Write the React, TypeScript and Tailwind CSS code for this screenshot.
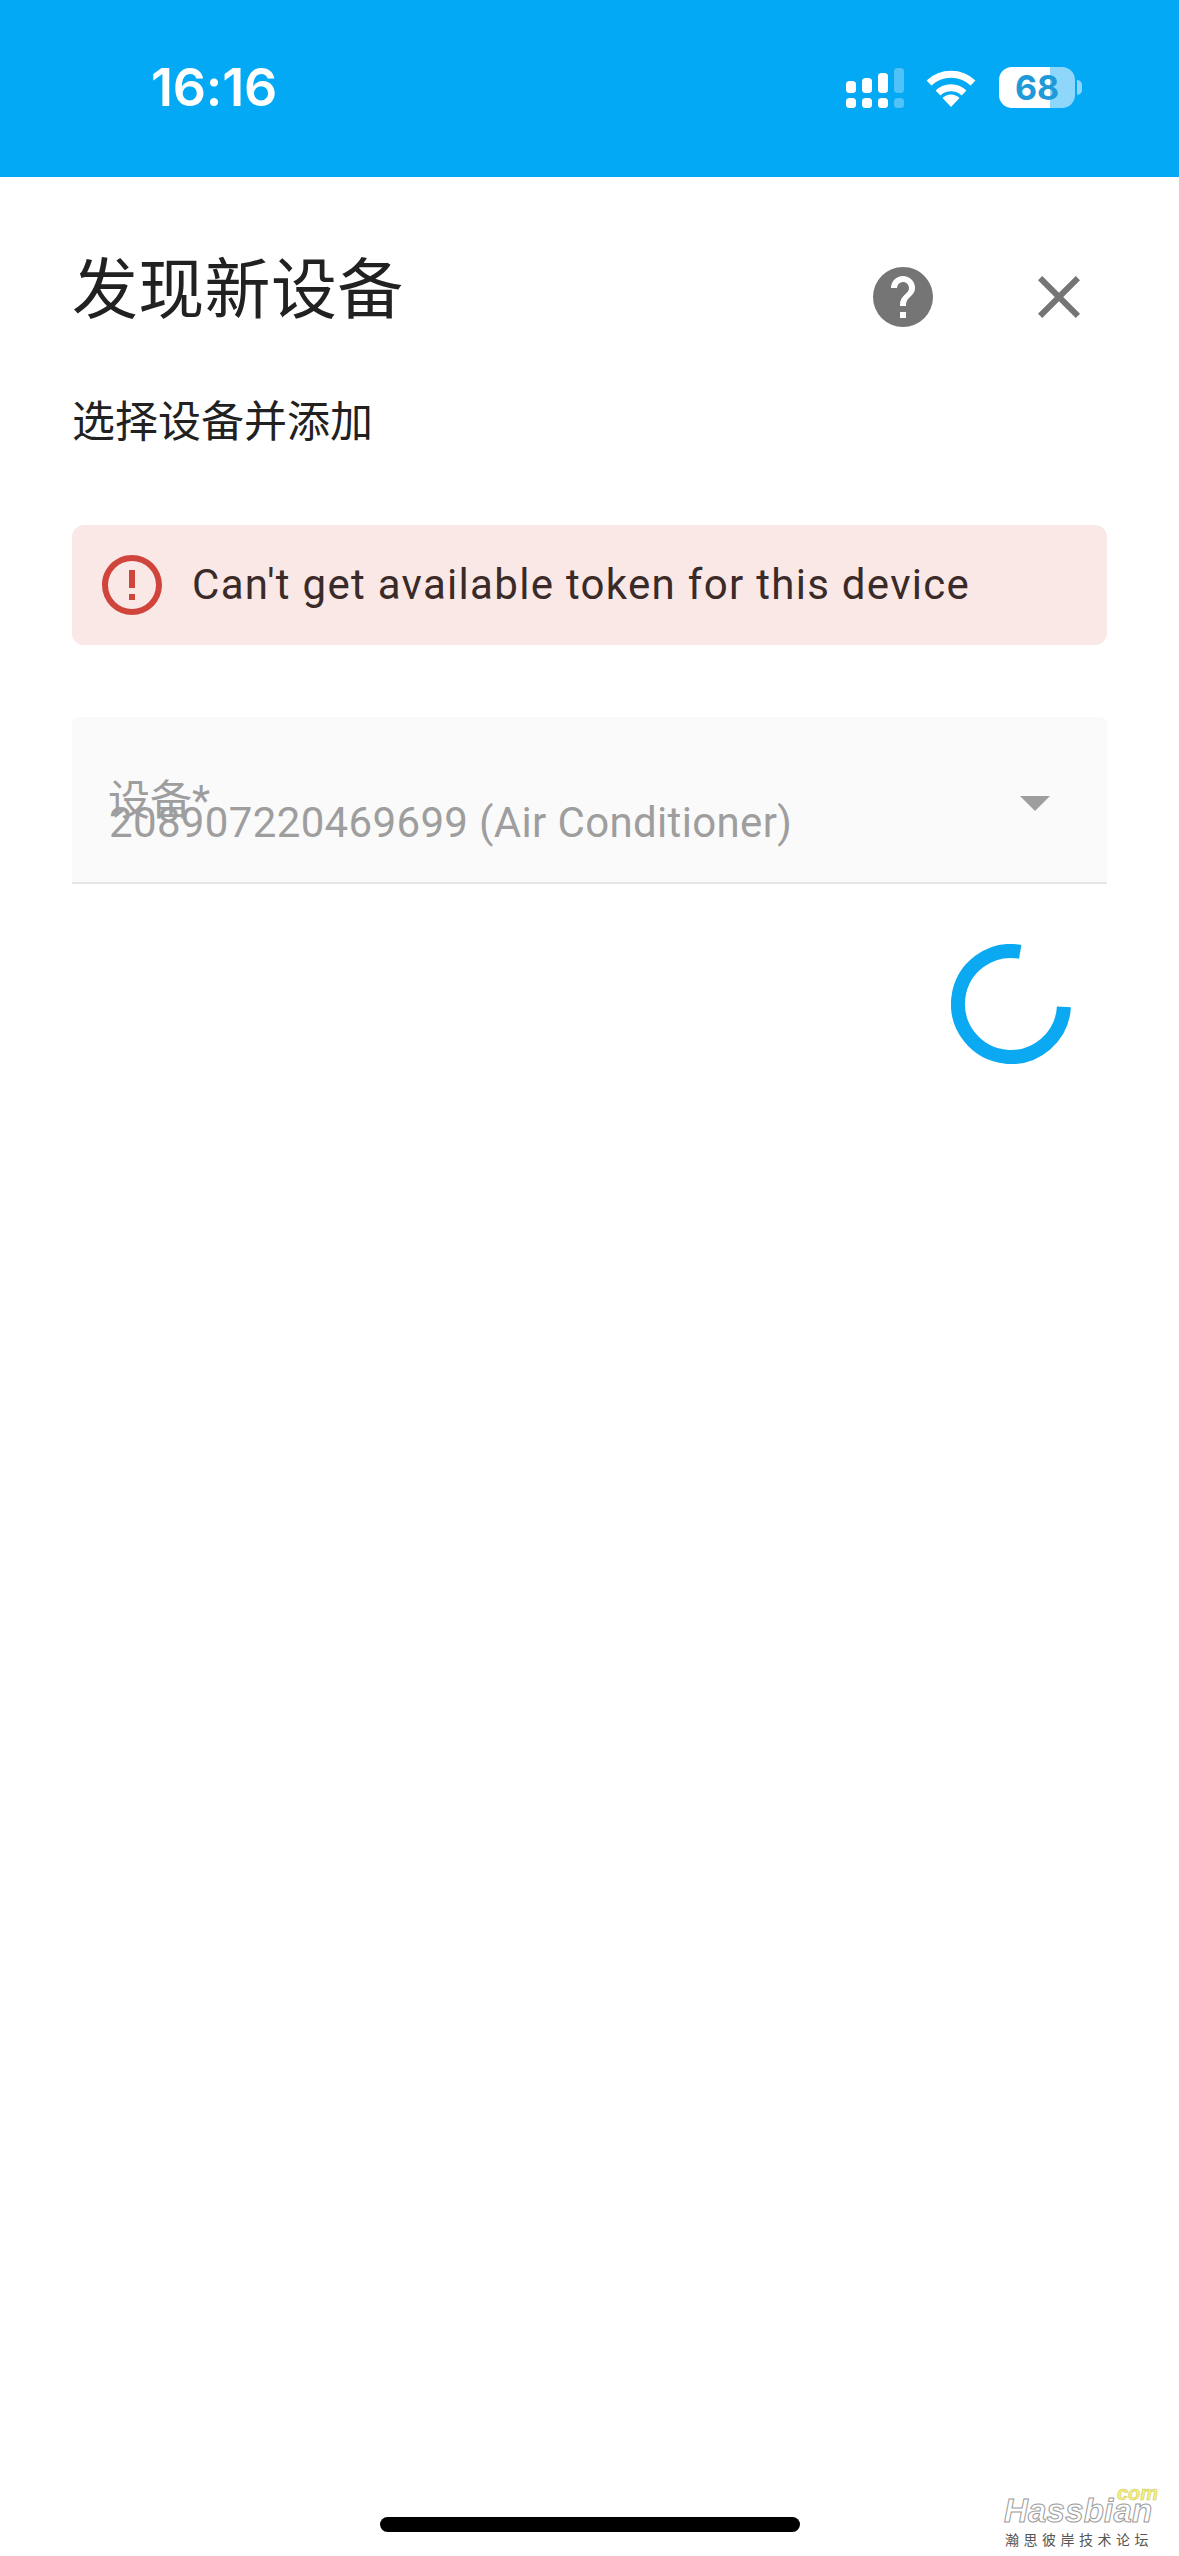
// Discover-device dialog, phone screenshot
const ROBOTO = "font-['Roboto','Noto_Sans_CJK_SC',sans-serif]";

function SignalIcon() {
  return (
    <svg width="58" height="40" viewBox="0 0 58 40" fill="#fff">
      <rect x="0" y="13" width="10" height="12" rx="3.5" />
      <rect x="16" y="10" width="10" height="15" rx="3.5" />
      <rect x="32" y="5" width="10" height="20" rx="3.5" />
      <rect x="48" y="0" width="10" height="25" rx="3.5" opacity="0.3" />
      <rect x="0" y="30" width="10" height="10" rx="3.5" />
      <rect x="16" y="30" width="10" height="10" rx="3.5" />
      <rect x="32" y="30" width="10" height="10" rx="3.5" />
      <rect x="48" y="30" width="10" height="10" rx="3.5" opacity="0.3" />
    </svg>
  );
}

function WifiIcon() {
  return (
    <svg width="50" height="39" viewBox="0 0 50 39" fill="none" stroke="#fff" strokeWidth="7">
      <path d="M3 15 A 32 32 0 0 1 47 15" />
      <path d="M12 25 A 19 19 0 0 1 38 25" />
      <path d="M25 39 L16.5 30 A 12 12 0 0 1 33.5 30 Z" fill="#fff" stroke="none" />
    </svg>
  );
}

function Battery() {
  return (
    <div className="flex items-center gap-[2px]">
      <div className="w-[76px] h-[41px] rounded-[13px] bg-[linear-gradient(90deg,#ffffff_67%,#8fd6fb_67%)] flex items-center justify-center font-['Inter',sans-serif] font-bold text-[34px] leading-none text-[#1f9ad8]">
        68
      </div>
      <div className="w-[5px] h-[15px] rounded-r-full bg-[#8fd6fb]" />
    </div>
  );
}

function StatusBar() {
  return (
    <div className="h-[177px] bg-[#03a9f4] flex items-center pl-[151px] pr-[97px] pb-[2px] text-white shrink-0">
      <span className="font-['Inter',sans-serif] font-semibold text-[52px] leading-none tracking-[-0.2px]">16:16</span>
      <div className="ml-auto flex items-center">
        <SignalIcon />
        <div className="ml-[22px]"><WifiIcon /></div>
        <div className="ml-[23px]"><Battery /></div>
      </div>
    </div>
  );
}

function MdiIcon({ d, className }: { d: string; className: string }) {
  return (
    <svg viewBox="0 0 24 24" className={className} fill="currentColor">
      <path d={d} />
    </svg>
  );
}

export default function App() {
  return (
    <div className={`relative min-h-[2556px] w-[1179px] flex flex-col bg-white overflow-hidden ${ROBOTO}`}>
      <StatusBar />

      <div className="flex-1 px-[72px]">
        {/* title row */}
        <div className="mt-[74px] flex items-start">
          <h1 className="text-[66px] leading-[80px] tracking-[0.3px] font-normal text-[#212121]">发现新设备</h1>
          <div className="ml-auto mr-[12px] mt-[10px] flex gap-[84px] text-[#757575]">
            <MdiIcon
              className="w-[72px] h-[72px]"
              d="M15.07,11.25L14.17,12.17C13.45,12.89 13,13.5 13,15H11V14.5C11,13.39 11.45,12.39 12.17,11.67L13.41,10.41C13.78,10.05 14,9.55 14,9C14,7.89 13.1,7 12,7A2,2 0 0,0 10,9H8A4,4 0 0,1 12,5A4,4 0 0,1 16,9C16,9.88 15.64,10.67 15.07,11.25M13,19H11V17H13M12,2A10,10 0 0,0 2,12A10,10 0 0,0 12,22A10,10 0 0,0 22,12C22,6.47 17.5,2 12,2Z"
            />
            <MdiIcon
              className="w-[72px] h-[72px]"
              d="M19,6.41L17.59,5L12,10.59L6.41,5L5,6.41L10.59,12L5,17.59L6.41,19L12,13.41L17.59,19L19,17.59L13.41,12L19,6.41Z"
            />
          </div>
        </div>

        <p className="mt-[59px] text-[43px] leading-[60px] text-[#212121]">选择设备并添加</p>

        {/* error alert */}
        <div className="mt-[73px] h-[120px] rounded-[12px] bg-[#f9e8e6] flex items-center pl-[24px]">
          <MdiIcon
            className="w-[72px] h-[72px] text-[#d0453b]"
            d="M11,15H13V17H11V15M11,7H13V13H11V7M12,2C6.47,2 2,6.5 2,12A10,10 0 0,0 12,22A10,10 0 0,0 22,12A10,10 0 0,0 12,2M12,20A8,8 0 0,1 4,12A8,8 0 0,1 12,4A8,8 0 0,1 20,12A8,8 0 0,1 12,20Z"
          />
          <span className="ml-[24px] text-[42px] leading-none tracking-[1.3px] text-[#3a2a28]">
            Can't get available token for this device
          </span>
        </div>

        {/* device select */}
        <div className="relative mt-[72px] h-[167px] bg-[#fafafa] border-b-2 border-[#e6e6e6] rounded-t-[6px] flex items-center pl-[37px] pr-[57px] text-[#9e9e9e]">
          <span className="absolute left-[36px] top-[59px] text-[42px] leading-[50px]">设备*</span>
          <span className="mt-[47px] text-[42px] leading-[50px] tracking-[0.35px]">208907220469699 (Air Conditioner)</span>
          <div className="ml-auto mt-[7px] w-0 h-0 border-x-[15px] border-x-transparent border-t-[15px] border-t-[#9e9e9e]" />
        </div>

        {/* spinner */}
        <div className="mt-[60px] flex justify-end pr-[36px]">
          <svg width="120" height="120" viewBox="0 0 120 120" fill="none">
            <path d="M112.9 62.8 A53 53 0 1 1 69.2 7.8" stroke="#0aa9f2" strokeWidth="14" />
          </svg>
        </div>
      </div>

      {/* home indicator */}
      <div className="pb-[24px] flex justify-center">
        <div className="ml-[1px] w-[420px] h-[15px] rounded-full bg-black" />
      </div>

      {/* forum watermark */}
      <div className="absolute left-[1004px] top-[2484px] w-[160px] h-[64px]">
        <span className="absolute left-[113px] top-0 font-['Liberation_Sans',sans-serif] italic font-bold text-[20px] leading-[18px] text-[#f6f078] [-webkit-text-stroke:0.5px_#c9c46a]">com</span>
        <span className="absolute left-0 top-[10px] font-['Liberation_Sans',sans-serif] italic font-bold text-[33px] leading-[34px] tracking-[0.2px] text-white [-webkit-text-stroke:1px_#9a9a9a]">Hassbian</span>
        <span className="absolute left-[1px] top-[47px] font-['Noto_Sans_CJK_SC',sans-serif] text-[14px] leading-[16px] tracking-[4.5px] whitespace-nowrap text-[#555]">瀚思彼岸技术论坛</span>
      </div>
    </div>
  );
}
